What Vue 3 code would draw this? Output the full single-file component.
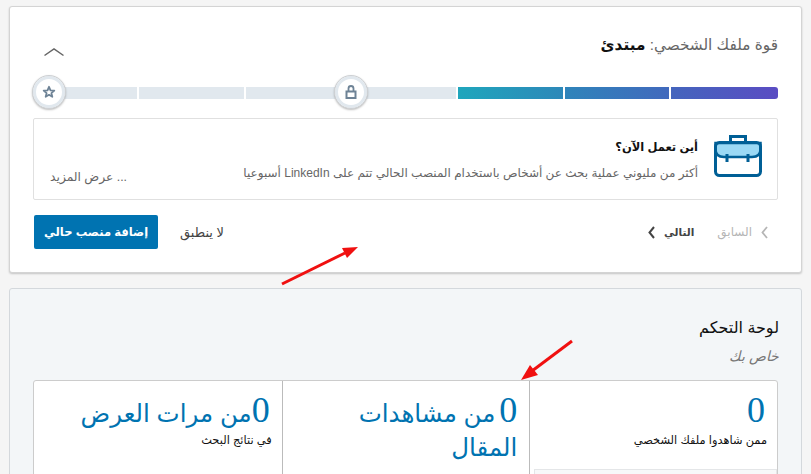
<script setup>
const segments = ['off', 'off', 'off', 'off', 'on1', 'on2', 'on3']
const stats = [
  { num: '0', text: '', spaced: false, line2: '', label: 'ممن شاهدوا ملفك الشخصي', inner: true },
  { num: '0', text: 'من مشاهدات', spaced: true, line2: 'المقال', label: '' },
  { num: '0', text: 'من مرات العرض', spaced: false, line2: '', label: 'في نتائج البحث' }
]
</script>

<template>
  <div class="page" dir="rtl">
    <section class="card">
      <header class="strength-head">
        <h2 class="strength-title">قوة ملفك الشخصي: <strong>مبتدئ</strong></h2>
        <svg class="chevron" width="20" height="10" viewBox="0 0 20 10">
          <path d="M0.500 8.500 L10 2 L19.500 8.500" fill="none" stroke="#666" stroke-width="1.500" />
        </svg>
      </header>

      <div class="meter" dir="ltr">
        <span v-for="(s, i) in segments" :key="i" class="seg" :class="s"></span>
        <span class="knob knob-star">
          <svg width="14" height="14" viewBox="0 0 14 14">
            <path d="M7 1.800 L8.500 5.300 L12.300 5.600 L9.400 8.100 L10.300 11.800 L7 9.800 L3.700 11.800 L4.600 8.100 L1.700 5.600 L5.500 5.300 Z" fill="none" stroke="#6e8396" stroke-width="1.800" stroke-linejoin="round" />
          </svg>
        </span>
        <span class="knob knob-lock">
          <svg width="14" height="16" viewBox="0 0 14 16">
            <path d="M4.500 7 V4.500 a2.500 2.500 0 0 1 5 0 V7" fill="none" stroke="#6e8396" stroke-width="1.800" />
            <rect x="2.500" y="7.500" width="9" height="6.500" fill="none" stroke="#6e8396" stroke-width="2" />
          </svg>
        </span>
      </div>

      <div class="prompt">
        <svg class="case" width="48" height="42" viewBox="0 0 48 42">
          <path d="M16.500 7 V1.500 H31.500 V7" fill="none" stroke="#005f96" stroke-width="3" />
          <path d="M1.500 8 H46.500 V14 Q46.500 22 38 22 H10 Q1.500 22 1.500 14 Z" fill="#9bd9f5" stroke="#005f96" stroke-width="2.500" />
          <rect x="1.500" y="7.500" width="45" height="33" rx="4" fill="none" stroke="#005f96" stroke-width="3" />
          <path d="M13 19 V27 M34 19 V27" stroke="#005f96" stroke-width="3" />
        </svg>
        <div class="prompt-text">
          <h3 class="prompt-title">أين تعمل الآن؟</h3>
          <p class="prompt-desc">أكثر من مليوني عملية بحث عن أشخاص باستخدام المنصب الحالي تتم على LinkedIn أسبوعيا</p>
        </div>
        <span class="more">... عرض المزيد</span>
      </div>

      <footer class="actions">
        <nav class="pager">
          <span class="prev">
            <svg width="7" height="13" viewBox="0 0 7 13"><path d="M6 1 L1.500 6.500 L6 12" fill="none" stroke="#b5b5b5" stroke-width="1.800" /></svg>
            السابق
          </span>
          <span class="next">
            التالي
            <svg width="7" height="13" viewBox="0 0 7 13"><path d="M6 1 L1.500 6.500 L6 12" fill="none" stroke="#444" stroke-width="2" /></svg>
          </span>
        </nav>
        <div class="cta">
          <span class="skip">لا ينطبق</span>
          <button class="primary">إضافة منصب حالي</button>
        </div>
      </footer>
    </section>

    <section class="dash">
      <h2 class="dash-title">لوحة التحكم</h2>
      <p class="dash-sub">خاص بك</p>
      <div class="stats">
        <div v-for="(s, i) in stats" :key="i" class="stat">
          <div class="stat-value"><span class="num" :class="{ spaced: s.spaced }">{{ s.num }}</span><span>{{ s.text }}</span></div>
          <div v-if="s.line2" class="stat-line2">{{ s.line2 }}</div>
          <div v-if="s.label" class="stat-label">{{ s.label }}</div>
          <div v-if="s.inner" class="inner"></div>
        </div>
      </div>
    </section>

    <svg class="overlay" width="811" height="474" viewBox="0 0 811 474">
      <path d="M282 284 L345 253" stroke="#f01010" stroke-width="3" />
      <path d="M358 247 L342 248 L347 258 Z" fill="#f01010" />
      <path d="M572 341 L532 371" stroke="#f01010" stroke-width="3" />
      <path d="M521 380 L530 365 L538 375 Z" fill="#f01010" />
    </svg>
  </div>
</template>

<style>
html, body { margin: 0; background: #f5f5f5; }
</style>

<style scoped>
.page {
  position: relative;
  width: 811px;
  height: 474px;
  overflow: hidden;
  box-sizing: border-box;
  padding: 6px 9px 0;
  font-family: Arial, "Liberation Sans", "DejaVu Sans", sans-serif;
  background: #f5f5f5;
  color: #000;
}
.card {
  box-sizing: border-box;
  height: 267px;
  background: #fff;
  border: 1px solid #d4d4d4;
  border-radius: 3px;
  box-shadow: 0 1px 2px rgba(0, 0, 0, .2);
  padding: 25px 23px 0;
}
.strength-head {
  display: flex;
  justify-content: space-between;
  align-items: flex-start;
  height: 55px;
}
.strength-title {
  margin: 0;
  font-size: 15.300px;
  line-height: 26px;
  font-weight: 400;
  color: #666;
}
.strength-title strong { color: #111; font-weight: 700; }
.chevron { margin: 15px 0 0 11px; }
.meter {
  position: relative;
  display: flex;
  gap: 2px;
  height: 12px;
}
.seg { flex: 1 1 104px; background: #e1e8ee; }
.on1 { background: linear-gradient(90deg, #1fa6bc, #2d88b9); }
.on2 { background: linear-gradient(90deg, #2f84ba, #4169bd); }
.on3 { flex: 0 0 107px; background: linear-gradient(90deg, #4465bd, #5a4cc3); border-radius: 0 3px 3px 0; }
.knob {
  position: absolute;
  top: -12px;
  box-sizing: border-box;
  width: 34px;
  height: 34px;
  border-radius: 50%;
  background: #fff;
  border: 1px solid #cdd0d3;
  box-shadow: inset 0 0 0 3px #e1e8ee, 0 1px 2px rgba(0, 0, 0, .25);
  display: flex;
  align-items: center;
  justify-content: center;
}
.knob-star { left: -1px; }
.knob-lock { left: 301px; }
.prompt {
  position: relative;
  box-sizing: border-box;
  height: 82px;
  margin-top: 19px;
  background: #fff;
  border: 1px solid #e0e0e0;
  border-radius: 2px;
  padding: 16px 15px 0;
  display: flex;
  gap: 16px;
}
.prompt-title { margin: 0; font-size: 11.500px; line-height: 24px; font-weight: 700; color: #111; }
.prompt-desc { margin: 5px 0 0; font-size: 12px; line-height: 18px; color: #666; }
.more {
  position: absolute;
  left: 16px;
  bottom: 13px;
  font-size: 12.300px;
  line-height: 18px;
  color: #666;
}
.actions {
  display: flex;
  justify-content: space-between;
  align-items: center;
  margin-top: 15px;
  padding-left: 1px;
  height: 34px;
}
.pager { display: flex; align-items: center; gap: 23px; padding-right: 10px; }
.prev, .next { display: flex; align-items: center; gap: 9px; }
.prev { color: #b5b5b5; font-size: 12px; }
.next { color: #444; font-size: 10.500px; font-weight: 700; }
.cta { display: flex; align-items: center; gap: 22px; }
.skip { font-size: 13px; color: #444; }
.primary {
  width: 124px;
  height: 34px;
  border: 0;
  border-radius: 2px;
  background: #0073b1;
  color: #fff;
  font-family: inherit;
  font-size: 11.500px;
  font-weight: 700;
  padding: 0;
}
.dash {
  margin-top: 15px;
  height: 220px;
  background: #f3f6f8;
  border: 1px solid #d4d8dc;
  border-radius: 3px;
  padding: 26px 23px 0;
}
.dash-title { margin: 0 -1px 0 0; font-size: 16px; line-height: 26px; font-weight: 400; color: #111; }
.dash-sub { margin: 5px -1px 0 0; font-size: 14px; line-height: 20px; font-style: italic; color: #777; }
.stats {
  display: grid;
  grid-template-columns: repeat(3, 1fr);
  margin-top: 14px;
  background: #fff;
  border: 1px solid #ccc;
  border-radius: 3px 3px 0 0;
  height: 140px;
}
.stat { padding: 9px 12px 0; border-left: 1px solid #bbb; position: relative; }
.stat:last-child { border-left: 0; }
.stat-value { font-size: 24.500px; line-height: 40px; height: 40px; color: #0073b1; white-space: nowrap; }
.stat-line2 { font-size: 24.500px; line-height: 36px; color: #0073b1; }
.num { font-family: "Liberation Serif", serif; font-size: 36px; line-height: 40px; }
.spaced { margin-left: 4px; }
.stat-label { font-size: 11.400px; line-height: 16px; margin: 2px -2px 0 0; color: #111; }
.inner {
  position: absolute;
  right: 0;
  left: 4px;
  top: 88px;
  height: 40px;
  background: #f7f8f9;
  border: 1px solid #e4e6e8;
}
.overlay { position: absolute; left: 0; top: 0; pointer-events: none; }
</style>
